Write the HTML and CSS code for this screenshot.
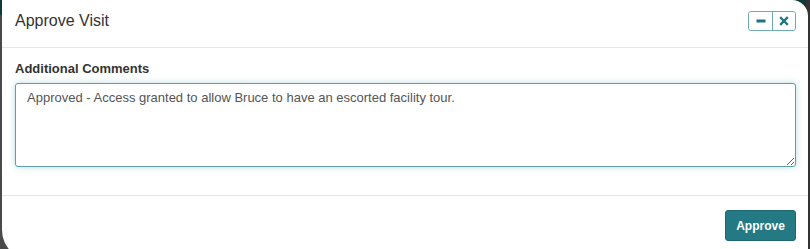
FILE: index.html
```html
<!DOCTYPE html>
<html>
<head>
<meta charset="utf-8">
<link rel="stylesheet" href="styles.css">
</head>
<body>
<div class="backdrop">
  <div class="modal">
    <div class="modal-header">
      <h1 class="modal-title">Approve Visit</h1>
      <div class="win-buttons">
        <button class="win-btn" aria-label="Minimize">
          <svg width="10" height="10" viewBox="0 0 10 10"><rect x="0.5" y="3.5" width="9" height="3" fill="#1e7480"/></svg>
        </button>
        <button class="win-btn" aria-label="Close">
          <svg width="10" height="10" viewBox="0 0 10 10"><path d="M2 2 L8 8 M8 2 L2 8" stroke="#1e7480" stroke-width="2.3" stroke-linecap="square"/></svg>
        </button>
      </div>
    </div>
    <div class="modal-body">
      <label class="field-label" for="comments">Additional Comments</label>
      <textarea id="comments" class="comments">Approved - Access granted to allow Bruce to have an escorted facility tour.</textarea>
    </div>
    <div class="modal-footer">
      <button class="btn-primary">Approve</button>
    </div>
  </div>
</div>
</body>
</html>
```

FILE: styles.css
```css
html, body {
  margin: 0;
  padding: 0;
  height: 100%;
}
body {
  background: linear-gradient(to bottom, #0f3a3c 0, #0f3a3c 14px, #4a4a4a 16px, #4a4a4a 100%);
  font-family: "Liberation Sans", Arial, sans-serif;
  overflow: hidden;
}
.backdrop {
  display: flex;
  height: 249px;
  padding-left: 2px;
  padding-right: 2px;
  background: linear-gradient(to right, transparent 0, transparent 806px, #333 806px);
}
.modal {
  width: 806px;
  height: 260px;
  background: #fff;
  border-top-right-radius: 16px;
  border-bottom-left-radius: 30px;
  display: flex;
  flex-direction: column;
}
.modal-header {
  height: 47px;
  border-bottom: 1px solid #e5e5e5;
  display: flex;
  align-items: center;
  justify-content: space-between;
  padding: 0 12px 0 13px;
  box-sizing: content-box;
}
.modal-title {
  margin: 0;
  font-size: 16px;
  font-weight: normal;
  color: #333;
  position: relative;
  top: -3px;
}
.win-buttons {
  display: flex;
  border: 1px solid #6fa9b1;
  border-radius: 3px;
  height: 18px;
  position: relative;
  top: -3px;
}
.win-btn {
  width: 23px;
  height: 18px;
  padding: 0;
  border: none;
  background: #fff;
  display: flex;
  align-items: center;
  justify-content: center;
  border-radius: 3px;
}
.win-btn + .win-btn {
  border-left: 1px solid #6fa9b1;
  border-radius: 0 3px 3px 0;
}
.modal-body {
  padding: 13px 12px 28px 13px;
  border-bottom: 1px solid #e5e5e5;
  display: flex;
  flex-direction: column;
}
.field-label {
  font-size: 13px;
  font-weight: bold;
  color: #333;
  line-height: 15px;
  margin-bottom: 7px;
}
.comments {
  height: 84px;
  box-sizing: border-box;
  border: 1px solid #5d9ea8;
  border-radius: 3px;
  box-shadow: 0 0 6px rgba(102, 175, 185, 0.45);
  padding: 5px 11px;
  font-family: "Liberation Sans", Arial, sans-serif;
  font-size: 13px;
  line-height: 18px;
  color: #555;
  resize: vertical;
  outline: none;
  margin: 0;
}
.modal-footer {
  display: flex;
  justify-content: flex-end;
  padding: 14px 12px 0 13px;
}
.btn-primary {
  background: #237a85;
  color: #fff;
  font-family: "Liberation Sans", Arial, sans-serif;
  font-weight: bold;
  font-size: 12px;
  height: 31px;
  width: 71px;
  border: 1px solid #1c6770;
  border-radius: 3px;
  padding: 0;
}
```
